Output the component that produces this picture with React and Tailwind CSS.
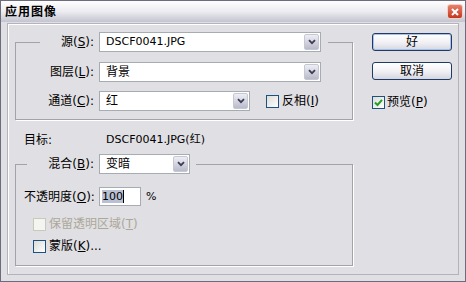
import React from 'react';

const Chevron = () => (
  <svg width="8" height="6" viewBox="0 0 8 6">
    <path d="M1 1.2 L4 4.2 L7 1.2" fill="none" stroke="#3c3c5a" strokeWidth="1.8" />
  </svg>
);

const Select = ({ value, width, latin }) => (
  <div className={`flex h-[20px] ${width} items-center border border-[#a5acb2] bg-white p-px`}>
    <span className={`flex-1 pl-[5px] leading-[14px] ${latin ? 'text-[11px]' : 'text-[12px]'}`}>{value}</span>
    <span className="flex h-full w-[15px] items-center justify-center rounded-[2px] border border-[#c6c7d4] bg-gradient-to-b from-[#eeeff5] to-[#babbc9]">
      <Chevron />
    </span>
  </div>
);

const Check = ({ checked, disabled }) => (
  <span
    className={`flex h-[13px] w-[13px] shrink-0 items-center justify-center border ${
      disabled ? 'border-[#cac8bb] bg-[#f4f4f0]' : 'border-[#1c5180] bg-gradient-to-br from-[#dcdcd7] to-white'
    }`}
  >
    {checked && (
      <svg width="9" height="9" viewBox="0 0 9 9">
        <path d="M1 4.5 L3.5 7 L8 1.8" fill="none" stroke="#21a121" strokeWidth="2" />
      </svg>
    )}
  </span>
);

const Label = ({ children, width }) => (
  <span className={`${width} shrink-0 text-right text-[12px] leading-[14px]`}>{children}</span>
);

const Button = ({ children, primary }) => (
  <button
    className={`flex h-[18px] w-[80px] items-center justify-center rounded-[3px] border border-[#1f3a66] bg-gradient-to-b from-white via-[#f2f2f6] to-[#d6d6e0] text-[12px] leading-[14px] ${
      primary ? 'shadow-[inset_0_0_0_1px_#a9c0e8]' : ''
    }`}
  >
    {children}
  </button>
);

export default function App() {
  return (
    <div className="flex h-[282px] w-[466px] flex-col overflow-hidden border border-[#6c6c7e] bg-[#e0dfe3] font-[family-name:'DejaVu_Sans','Noto_Sans_CJK_SC',sans-serif] text-black [text-autospace:no-autospace]">
      <div className="flex h-[21px] shrink-0 items-center justify-between bg-gradient-to-b from-[#fefefe] via-[#ececf1] to-[#c4c4d0] pl-[4px] pr-[2px]">
        <span className="text-[12px] font-bold leading-[14px] tracking-[1px]">应用图像</span>
        <span className="flex h-[15px] w-[16px] items-center justify-center rounded-[3px] border border-[#f0d0c8] bg-gradient-to-b from-[#e8806a] to-[#c2361c]">
          <svg width="8" height="8" viewBox="0 0 8 8">
            <path d="M1 1 L7 7 M7 1 L1 7" stroke="white" strokeWidth="2" />
          </svg>
        </span>
      </div>

      <div className="flex flex-1 px-[6px] pb-[6px] pt-px">
        <div className="flex flex-1 border border-[#b4b3bb] shadow-[inset_1px_1px_0_#fff]">
          <div className="flex flex-col pl-[7px] pt-[8px]">
            <fieldset className="w-[338px] border border-[#a3a2a9] shadow-[1px_1px_0_#fff] pb-[8px]">
              <legend className="ml-[24px] flex items-center bg-[#e0dfe3] pr-[7px]">
                <Label width="w-[54px]">源(<u>S</u>):</Label>
                <span className="ml-[5px]">
                  <Select value="DSCF0041.JPG" width="w-[222px]" latin />
                </span>
              </legend>
              <div className="mt-[10px] flex items-center pl-[24px]">
                <Label width="w-[54px]">图层(<u>L</u>):</Label>
                <span className="ml-[5px]">
                  <Select value="背景" width="w-[222px]" />
                </span>
              </div>
              <div className="mt-[9px] flex items-center pl-[24px]">
                <Label width="w-[54px]">通道(<u>C</u>):</Label>
                <span className="ml-[5px]">
                  <Select value="红" width="w-[151px]" />
                </span>
                <span className="ml-[16px] flex items-center gap-[3px] text-[12px] leading-[14px]">
                  <Check />
                  <span>反相(<u>I</u>)</span>
                </span>
              </div>
            </fieldset>

            <div className="mt-[13px] flex h-[14px] items-center text-[12px] leading-[14px]">
              <span className="w-[91px] pl-[9px]">目标:</span>
              <span className="text-[11px]">DSCF0041.JPG(红)</span>
            </div>

            <fieldset className="mt-[7px] h-[112px] w-[338px] border border-[#a3a2a9] shadow-[1px_1px_0_#fff]">
              <legend className="ml-[11px] flex items-center bg-[#e0dfe3] pr-[6px]">
                <Label width="w-[67px]">混合(<u>B</u>):</Label>
                <span className="ml-[5px]">
                  <Select value="变暗" width="w-[91px]" />
                </span>
              </legend>
              <div className="mt-[13px] flex items-center pl-[8px]">
                <span className="w-[75px] shrink-0 text-[12px] leading-[14px]">不透明度(<u>O</u>):</span>
                <span className="flex h-[19px] w-[42px] items-center border border-[#a5acb2] bg-white pl-[2px]">
                  <span className="bg-[#b9c0d4] text-[11px] leading-[13px]">100</span>
                  <span className="h-[13px] w-px bg-black" />
                </span>
                <span className="ml-[5px] text-[11px] leading-[14px]">%</span>
              </div>
              <div className="mt-[11px] flex items-center gap-[3px] pl-[17px] text-[12px] leading-[14px] text-[#aca899]">
                <Check disabled />
                <span>保留透明区域(<u>T</u>)</span>
              </div>
              <div className="mt-[8px] flex items-center gap-[3px] pl-[17px] text-[12px] leading-[14px]">
                <Check />
                <span>蒙版(<u>K</u>)...</span>
              </div>
            </fieldset>
          </div>

          <div className="ml-[19px] flex flex-col pt-[9px]">
            <Button primary>好</Button>
            <div className="mt-[11px]">
              <Button>取消</Button>
            </div>
            <div className="mt-[15px] flex items-center gap-[2px] text-[12px] leading-[14px]">
              <Check checked />
              <span>预览(<u>P</u>)</span>
            </div>
          </div>
        </div>
      </div>
    </div>
  );
}
